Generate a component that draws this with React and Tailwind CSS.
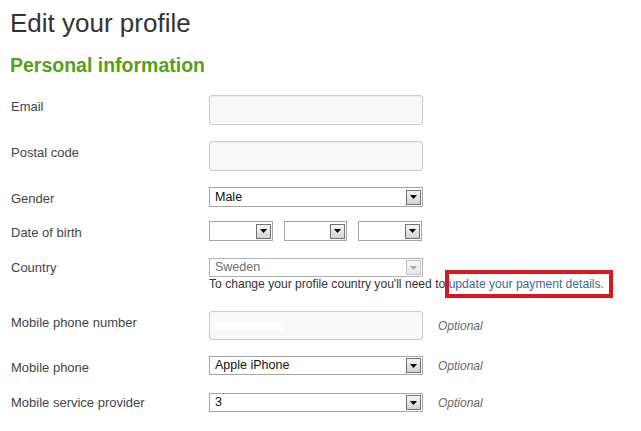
import React from 'react';

function Arrow({ disabled }) {
  return (
    <div
      className={
        disabled
          ? 'w-[15px] h-[15px] border border-[#c4c4c4] bg-gradient-to-b from-[#f7f7f7] to-[#e6e6e6] flex items-center justify-center shrink-0'
          : 'w-[15px] h-[15px] border border-[#707070] bg-gradient-to-b from-[#f6f6f6] to-[#d2d2d2] flex items-center justify-center shrink-0'
      }
    >
      <svg width="7" height="4" viewBox="0 0 7 4">
        <polygon points="0,0 7,0 3.5,4" fill={disabled ? '#a8a8a8' : '#000'} />
      </svg>
    </div>
  );
}

function Select({ value, width = 'w-[214px]', height = 'h-[20px]', disabled }) {
  return (
    <div
      className={`${width} ${height} border ${
        disabled ? 'border-[#b4b4b4]' : 'border-[#a5a5a5]'
      } bg-white flex items-center p-[1px] shrink-0`}
    >
      <span
        className={`flex-1 pl-[4px] text-[12.5px] leading-none ${
          disabled ? 'text-[#6d6d6d]' : 'text-[#111]'
        }`}
      >
        {value}
      </span>
      <Arrow disabled={disabled} />
    </div>
  );
}

function TextInput() {
  return (
    <div className="w-[214px] h-[30px] rounded-[3px] border border-[#c9c9c9] bg-[#f8f8f8] shadow-[inset_0_1px_1px_rgba(0,0,0,0.04)] shrink-0" />
  );
}

function Optional() {
  return <span className="ml-[15px] text-[12px] italic text-[#666]">Optional</span>;
}

function Row({ label, mt, labelPt = 'pt-[4px]', children }) {
  return (
    <div className={`flex items-start ${mt}`}>
      <div className={`w-[198px] shrink-0 text-[13px] leading-[16px] text-[#444] ${labelPt}`}>
        {label}
      </div>
      <div className="flex flex-col">{children}</div>
    </div>
  );
}

export default function App() {
  return (
    <div className="w-full h-[431px] bg-white overflow-hidden font-['Liberation_Sans',Arial,sans-serif]">
      <h1 className="pl-[10px] pt-[8px] text-[26px] leading-[30px] text-[#333] font-normal">
        Edit your profile
      </h1>
      <h2 className="pl-[10px] mt-[15px] text-[19.5px] leading-[24px] font-bold text-[#52a116]">
        Personal information
      </h2>

      <div className="pl-[11px] flex flex-col">
        <Row label="Email" mt="mt-[18px]">
          <TextInput />
        </Row>

        <Row label="Postal code" mt="mt-[16px]">
          <TextInput />
        </Row>

        <Row label="Gender" mt="mt-[16px]">
          <Select value="Male" />
        </Row>

        <Row label="Date of birth" mt="mt-[14px]">
          <div className="flex gap-[11px]">
            <Select value="" width="w-[64px]" />
            <Select value="" width="w-[63px]" />
            <Select value="" width="w-[64px]" />
          </div>
        </Row>

        <Row label="Country" mt="mt-[17px]" labelPt="pt-[2px]">
          <Select value="Sweden" height="h-[19px]" disabled />
          <p className="text-[12.1px] leading-[14px] text-[#333] whitespace-nowrap">
            To change your profile country you'll need to{' '}
            <span className="relative text-[#3b6b92]">
              update your payment details.
              <span className="absolute -top-[7px] -bottom-[7px] -left-[4px] -right-[9px] border-[4px] border-[#d7191f]" />
            </span>
          </p>
        </Row>

        <Row label="Mobile phone number" mt="mt-[20px]">
          <div className="flex items-center">
            <div className="w-[214px] h-[29px] rounded-[3px] border border-[#c9c9c9] bg-[#f8f8f8] flex items-center shrink-0">
              <div className="ml-[3px] w-[70px] h-[8px] bg-white" />
            </div>
            <Optional />
          </div>
        </Row>

        <Row label="Mobile phone" mt="mt-[16px]">
          <div className="flex items-center">
            <Select value="Apple iPhone" height="h-[19px]" />
            <Optional />
          </div>
        </Row>

        <Row label="Mobile service provider" mt="mt-[17px]" labelPt="pt-[2px]">
          <div className="flex items-center">
            <Select value="3" height="h-[19px]" />
            <Optional />
          </div>
        </Row>
      </div>
    </div>
  );
}
